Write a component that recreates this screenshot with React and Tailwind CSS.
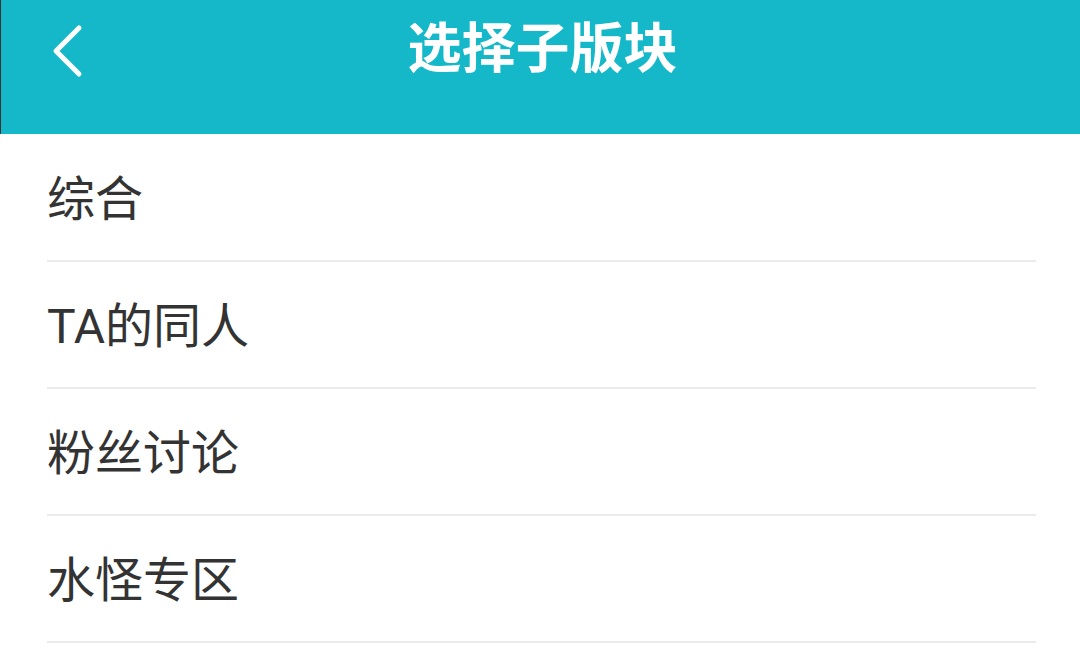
import React from 'react';

const items = ['综合', 'TA的同人', '粉丝讨论', '水怪专区'];

const App = () => {
  return (
    <div
      className="min-h-screen w-[1080px] h-[653px] overflow-hidden bg-white"
      style={{ fontFamily: 'Roboto, "Noto Sans CJK SC", sans-serif' }}
    >
      {/* Header */}
      <div className="h-[134px] bg-[#14b8c8] border-l border-[#333]">
        <div className="relative h-[100px] flex items-center justify-center">
          <button className="absolute left-[50px] top-[24px] w-[34px] h-[54px] flex items-center justify-center">
            <svg width="34" height="54" viewBox="0 0 34 54">
              <path d="M28 4 L5 27 L28 50" fill="none" stroke="#fff" strokeWidth="5" strokeLinecap="round" strokeLinejoin="round" />
            </svg>
          </button>
          <h1 className="text-[54px] font-bold text-white leading-none pl-[4px]">选择子版块</h1>
        </div>
      </div>

      {/* List */}
      <div className="px-[47px] mt-[1px]">
        {items.map((name) => (
          <div key={name} className="h-[127px] flex items-center border-b-2 border-[#ebebeb] mr-[-3px]">
            <span className="text-[48px] text-[#333333] leading-none pt-[4px]">{name}</span>
          </div>
        ))}
      </div>
    </div>
  );
};

export default App;
